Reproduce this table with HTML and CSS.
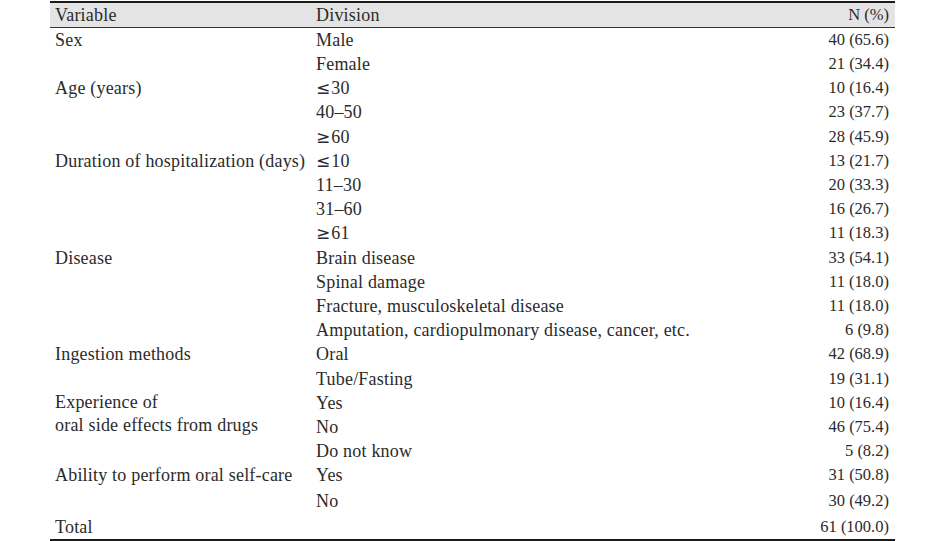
FILE: index.html
```html
<!DOCTYPE html>
<html>
<head>
<meta charset="utf-8">
<link rel="stylesheet" href="styles.css">
</head>
<body>
<table class="tbl">
  <thead>
    <tr class="head"><th class="c1">Variable</th><th class="c2">Division</th><th class="c3">N (%)</th></tr>
  </thead>
  <tbody>
    <tr><td class="c1">Sex</td><td class="c2">Male</td><td class="c3">40 (65.6)</td></tr>
    <tr><td class="c1"></td><td class="c2">Female</td><td class="c3">21 (34.4)</td></tr>
    <tr><td class="c1">Age (years)</td><td class="c2"><span class="sym">≤</span>30</td><td class="c3">10 (16.4)</td></tr>
    <tr><td class="c1"></td><td class="c2">40–50</td><td class="c3">23 (37.7)</td></tr>
    <tr><td class="c1"></td><td class="c2"><span class="sym">≥</span>60</td><td class="c3">28 (45.9)</td></tr>
    <tr><td class="c1">Duration of hospitalization (days)</td><td class="c2"><span class="sym">≤</span>10</td><td class="c3">13 (21.7)</td></tr>
    <tr><td class="c1"></td><td class="c2">11–30</td><td class="c3">20 (33.3)</td></tr>
    <tr><td class="c1"></td><td class="c2">31–60</td><td class="c3">16 (26.7)</td></tr>
    <tr><td class="c1"></td><td class="c2"><span class="sym">≥</span>61</td><td class="c3">11 (18.3)</td></tr>
    <tr><td class="c1">Disease</td><td class="c2">Brain disease</td><td class="c3">33 (54.1)</td></tr>
    <tr><td class="c1"></td><td class="c2">Spinal damage</td><td class="c3">11 (18.0)</td></tr>
    <tr><td class="c1"></td><td class="c2">Fracture, musculoskeletal disease</td><td class="c3">11 (18.0)</td></tr>
    <tr><td class="c1"></td><td class="c2">Amputation, cardiopulmonary disease, cancer, etc.</td><td class="c3">6 (9.8)</td></tr>
    <tr><td class="c1">Ingestion methods</td><td class="c2">Oral</td><td class="c3">42 (68.9)</td></tr>
    <tr><td class="c1"></td><td class="c2">Tube/Fasting</td><td class="c3">19 (31.1)</td></tr>
    <tr><td class="c1 top" rowspan="2">Experience of<br>oral side effects from drugs</td><td class="c2">Yes</td><td class="c3">10 (16.4)</td></tr>
    <tr><td class="c2">No</td><td class="c3">46 (75.4)</td></tr>
    <tr><td class="c1"></td><td class="c2">Do not know</td><td class="c3">5 (8.2)</td></tr>
    <tr><td class="c1">Ability to perform oral self-care</td><td class="c2">Yes</td><td class="c3">31 (50.8)</td></tr>
    <tr class="tall"><td class="c1"></td><td class="c2">No</td><td class="c3">30 (49.2)</td></tr>
    <tr class="last"><td class="c1">Total</td><td class="c2"></td><td class="c3">61 (100.0)</td></tr>
  </tbody>
</table>
</body>
</html>
```

FILE: styles.css
```css
html, body {
  margin: 0;
  padding: 0;
  background: #ffffff;
}
body {
  padding-top: 1px;
}
.tbl {
  margin-left: 50px;
  width: 845px;
  border-collapse: collapse;
  font-family: "Liberation Serif", "DejaVu Serif", serif;
  font-size: 18px;
  letter-spacing: 0.2px;
  color: #2b2b2b;
  border-top: 2px solid #1a1a1a;
  border-bottom: 2px solid #1a1a1a;
}
.tbl th {
  font-weight: normal;
  text-align: left;
}
.head {
  background: #e4e4e4;
  height: 24px;
  border-bottom: 1px solid #333333;
}
.tbl tbody tr {
  height: 24.2px;
}
.tbl td, .tbl th {
  padding: 0;
  line-height: 24px;
  vertical-align: middle;
  white-space: nowrap;
}
.c1 {
  width: 261px;
  padding-left: 5px !important;
}
.c2 {
  text-align: left;
}
.c3 {
  text-align: right !important;
  padding-right: 6px !important;
  font-size: 16.5px;
  letter-spacing: 0;
}
.sym {
  font-family: "DejaVu Sans", sans-serif;
  font-size: 17px;
  letter-spacing: 0;
  margin-right: 1px;
}
.top {
  vertical-align: top !important;
  line-height: 23px !important;
}
.tall {
  height: 28px !important;
}
.tbl tbody tr.last {
  height: 24px;
}
```
